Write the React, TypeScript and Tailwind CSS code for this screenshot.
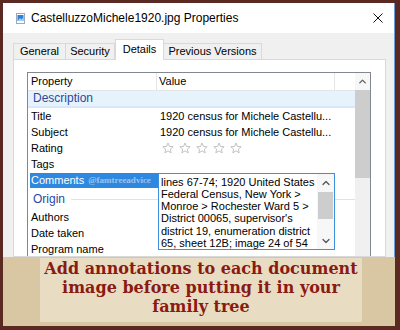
import { ChevronUp, ChevronDown } from "lucide-react";

const sans = { fontFamily: '"Liberation Sans", Arial, sans-serif' };

function Star() {
    return (
        <svg width="12" height="12" viewBox="0 0 24 24" fill="none" stroke="#b3b3b3" strokeWidth="1.6">
            <polygon points="12,2 14.9,8.9 22.3,9.5 16.7,14.4 18.4,21.6 12,17.8 5.6,21.6 7.3,14.4 1.7,9.5 9.1,8.9" />
        </svg>
    );
}

function Row({ name, value, children }: { name: string; value?: string; children?: React.ReactNode }) {
    return (
        <div className="flex h-[16px] leading-[16px] text-[11px] text-black">
            <div className="w-[130px] pl-[3px] whitespace-nowrap">{name}</div>
            <div className="flex-1 pl-[2px] whitespace-nowrap flex items-center">{value}{children}</div>
        </div>
    );
}

// comment edit box that drops over the rows below
function CommentBox() {
    const lines = [
        "lines 67-74; 1920 United States",
        "Federal Census, New York >",
        "Monroe > Rochester Ward 5 >",
        "District 00065, supervisor's",
        "district 19, enumeration district",
        "65, sheet 12B; image 24 of 54",
    ];
    return (
        <div className="absolute left-[130px] top-[100px] w-[177px] h-[77px] bg-white border border-[#3c8fdc] flex z-10">
            <div className="flex-1 pl-[2px] pt-[1.5px] text-[11px] leading-[12.3px] text-black">
                {lines.map((l) => (
                    <div key={l} className="whitespace-nowrap">{l}</div>
                ))}
            </div>
            <div className="w-[17px] flex flex-col bg-[#f7f7f7]">
                <div className="h-[17px] flex items-center justify-center">
                    <ChevronUp size={12} strokeWidth={2.5} color="#555" />
                </div>
                <div className="h-[27px] mt-[1px] mx-[1px] bg-[#cdcdcd]" />
                <div className="flex-1" />
                <div className="h-[17px] flex items-center justify-center">
                    <ChevronDown size={12} strokeWidth={2.5} color="#555" />
                </div>
            </div>
        </div>
    );
}

function ListView() {
    return (
        <div className="border border-[#828790] flex h-[300px]">
            <div className="flex-1 relative">
                {/* header */}
                <div className="flex h-[18px] border-b border-[#e5e5e5] text-[11px] leading-[17px] text-black">
                    <div className="w-[129px] pl-[3px] border-r border-[#e5e5e5]">Property</div>
                    <div className="w-[178px] pl-[2px] border-r border-[#e5e5e5]">Value</div>
                </div>

                <div className="h-[17px] bg-[#e6f2fc] border-b-2 border-[#d6e8f9] pl-[5px] text-[12px] leading-[15px] text-[#2a4aa0]">
                    Description
                </div>
                <Row name="Title" value="1920 census for Michele Castellu..." />
                <Row name="Subject" value="1920 census for Michele Castellu..." />
                <Row name="Rating">
                    <div className="flex gap-[5px] ml-[2px]">
                        <Star />
                        <Star />
                        <Star />
                        <Star />
                        <Star />
                    </div>
                </Row>
                <Row name="Tags" />

                {/* selected row */}
                <div className="flex h-[17px] items-center">
                    <div className="ml-[2px] w-[128px] h-[15px] bg-[#2f88e0] flex items-center pl-[1px] whitespace-nowrap overflow-hidden">
                        <span className="text-[11px] text-white">Comments</span>
                        <span
                            className="ml-[4px] text-[9px] font-bold text-white/50"
                            style={{ fontFamily: '"Liberation Serif", "Times New Roman", serif' }}
                        >
                            @famtreeadvice
                        </span>
                    </div>
                </div>

                <div className="h-[20px] flex items-center pl-[5px]">
                    <span className="text-[12px] text-[#2a4aa0]">Origin</span>
                    <div className="flex-1 h-px bg-[#d3e5f7] ml-[6px]" />
                </div>
                <Row name="Authors" />
                <Row name="Date taken" />
                <Row name="Program name" />

                <CommentBox />
            </div>

            {/* scrollbar */}
            <div className="w-[15px] bg-[#f0f0f0] flex flex-col">
                <div className="h-[17px] bg-[#f7f7f7] flex items-center justify-center">
                    <ChevronUp size={11} strokeWidth={3} color="#606060" />
                </div>
                <div className="h-[88px] bg-[#cdcdcd]" />
            </div>
        </div>
    );
}

function Window() {
    const tabs = [
        { label: "General", w: "w-[53px]" },
        { label: "Security", w: "w-[50px]" },
        { label: "Details", w: "w-[49px]", active: true },
        { label: "Previous Versions", w: "w-[99px]" },
    ];
    return (
        <div className="h-[254px] bg-white border-r border-[#6d9fd6] flex flex-col overflow-hidden">
            <div className="h-[30px] flex items-center pl-[13px] pr-[11px] shrink-0">
                <svg width="9" height="11" viewBox="0 0 9 11">
                    <rect x="0.5" y="0.5" width="8" height="10" fill="#fff" stroke="#9ab" strokeWidth="1" />
                    <rect x="1.5" y="2" width="6" height="6" fill="#2f7fd6" />
                    <path d="M1.5 8 L4 5 L5.5 6.5 L7.5 4.5 L7.5 8 Z" fill="#9fd0ff" />
                </svg>
                <span className="ml-[6px] text-[12px] text-black">CastelluzzoMichele1920.jpg Properties</span>
                <div className="flex-1" />
                <svg width="10" height="10" viewBox="0 0 10 10" stroke="#111" strokeWidth="1">
                    <path d="M0.5 0.5 L9.5 9.5 M9.5 0.5 L0.5 9.5" />
                </svg>
            </div>

            <div className="flex-1 bg-[#f0f0f0] pl-[10px] pr-[8px] pt-[6px] flex flex-col min-h-0">
                <div className="flex items-end h-[20px] shrink-0">
                    {tabs.map((t) =>
                        t.active ? (
                            <div
                                key={t.label}
                                className={`${t.w} h-[21px] -mb-px relative z-10 bg-white border border-b-0 border-[#d9d9d9] text-[11px] text-black flex items-center justify-center pb-[2px]`}
                            >
                                {t.label}
                            </div>
                        ) : (
                            <div
                                key={t.label}
                                className={`${t.w} h-[16px] bg-[#f0f0f0] border border-b-0 border-[#d9d9d9] -ml-px first:ml-0 text-[11px] text-black flex items-center justify-center`}
                            >
                                {t.label}
                            </div>
                        )
                    )}
                </div>
                <div className="flex-1 bg-white border border-[#d9d9d9] pl-[13px] pt-[12px] pr-[14px] overflow-hidden">
                    <ListView />
                </div>
            </div>
        </div>
    );
}

export default function App() {
    return (
        <div className="w-[400px] h-[330px] bg-[#5a2921] pt-[3px] pl-[3px] pr-[5px] pb-[4px] overflow-hidden" style={sans}>
            <div className="h-full bg-[#d8c7a2] flex flex-col">
                <Window />

                {/* caption banner */}
                <div className="flex-1">
                    <div
                        className="ml-[37px] mt-[1px] w-[322px] h-[64px] bg-[#e8ddc2] pt-[1px] text-center text-[16px] leading-[19px] font-bold text-[#8a1a12]"
                        style={{ fontFamily: '"DejaVu Serif", "Liberation Serif", serif' }}
                    >
                        Add annotations to each document
                        <br />
                        image before putting it in your
                        <br />
                        family tree
                    </div>
                </div>
            </div>
        </div>
    );
}
